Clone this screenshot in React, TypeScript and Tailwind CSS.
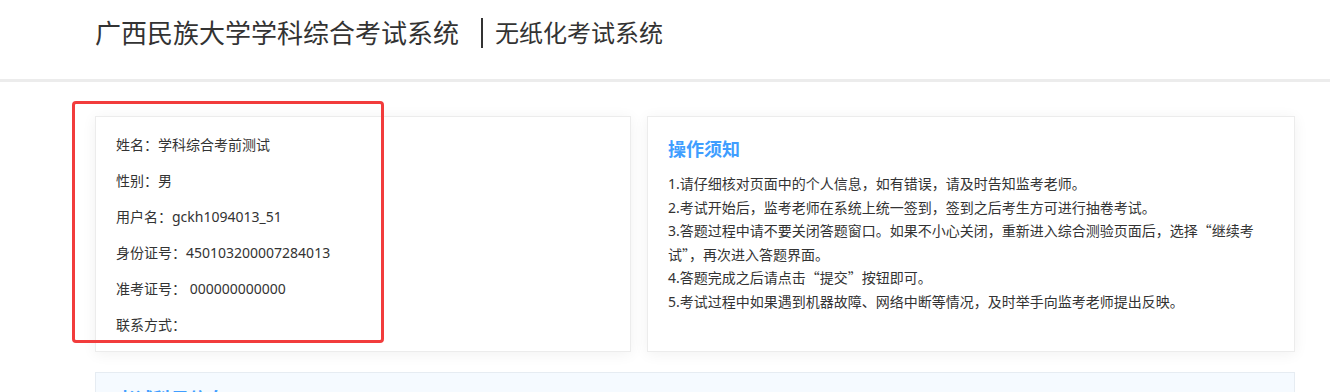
import React from 'react';

const info = [
  { label: '姓名：', value: '学科综合考前测试' },
  { label: '性别：', value: '男' },
  { label: '用户名：', value: 'gckh1094013_51' },
  { label: '身份证号：', value: '450103200007284013' },
  { label: '准考证号：', value: ' 000000000000' },
  { label: '联系方式：', value: '' },
];

// chinese full-width quotes
const Q: React.FC<{ children: React.ReactNode }> = ({ children }) => (
  <span style={{ fontFamily: '"Noto Sans CJK SC", sans-serif' }}>{children}</span>
);

const App: React.FC = () => {
  return (
    <div
      className="relative min-h-screen bg-white text-[#333]"
      style={{ fontFamily: '"Noto Sans", "Noto Sans CJK SC", sans-serif' }}
    >
      {/* Header */}
      <header className="h-[82px] border-b-[3px] border-[#ececec] bg-white">
        <div className="flex h-[66px] items-center pl-[95px]">
          <h1 className="text-[26px] leading-none font-normal text-[#333]">广西民族大学学科综合考试系统</h1>
          <span className="ml-[22px] mr-[12px] h-[30px] w-[2px] bg-[#333]" />
          <span className="text-[24px] leading-none text-[#333]">无纸化考试系统</span>
        </div>
      </header>

      <main className="ml-[95px] w-[1200px] pt-[34px]">
        <div className="flex gap-[16px]">
          {/* Personal info */}
          <div className="h-[236px] w-[536px] border border-[#ececec] bg-white pl-[20px] pt-[16px] shadow-[0_2px_14px_0_rgba(0,0,0,0.06)]">
            {info.map((row) => (
              <p key={row.label} className="h-[36px] text-[14px] leading-[24px] whitespace-pre text-[#333]">
                {row.label}
                {row.value}
              </p>
            ))}
          </div>

          {/* Notes */}
          <div className="h-[236px] w-[648px] border border-[#ececec] bg-white px-[20px] pt-[19px] shadow-[0_2px_14px_0_rgba(0,0,0,0.06)]">
            <h2 className="text-[18px] leading-[26px] font-bold text-[#409eff]">操作须知</h2>
            <div className="mt-[10px] text-[14px] leading-[23.5px] text-[#333]">
              <p>1.请仔细核对页面中的个人信息，如有错误，请及时告知监考老师。</p>
              <p>2.考试开始后，监考老师在系统上统一签到，签到之后考生方可进行抽卷考试。</p>
              <p>
                3.答题过程中请不要关闭答题窗口。如果不小心关闭，重新进入综合测验页面后，选择<Q>“</Q>继续考
                <br />
                试<Q>”</Q>，再次进入答题界面。
              </p>
              <p>
                4.答题完成之后请点击<Q>“</Q>提交<Q>”</Q>按钮即可。
              </p>
              <p>5.考试过程中如果遇到机器故障、网络中断等情况，及时举手向监考老师提出反映。</p>
            </div>
          </div>
        </div>

        {/* Exam list */}
        <div className="mt-[20px] h-[200px] border border-[#e6ecf2] bg-[#f5faff] pl-[21px] pt-[13px]">
          <h2 className="text-[18px] leading-[26px] font-bold text-[#409eff]">考试科目信息</h2>
        </div>
      </main>

      {/* red annotation frame */}
      <div className="pointer-events-none absolute left-[72px] top-[101px] h-[242px] w-[312px] rounded-[4px] border-[3px] border-[#f23c3c]" />
    </div>
  );
};

export default App;
